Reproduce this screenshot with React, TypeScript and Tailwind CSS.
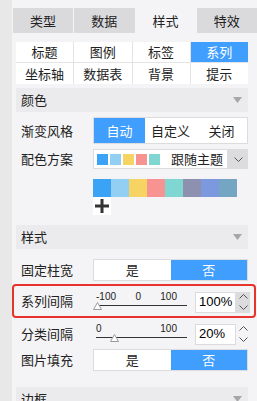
import { ReactNode } from "react";

const font = { fontFamily: '"Noto Sans CJK SC", "Liberation Sans", sans-serif' };

const Tri = () => (
    <svg width="9" height="6" viewBox="0 0 9 6" className="mr-[6px]">
        <path d="M0 0 L9 0 L4.5 6 Z" fill="#a6a6a8" />
    </svg>
);

const Header = ({ title }: { title: string }) => (
    <div className="flex items-center justify-between h-[24px] ml-[4px] mr-[9px] bg-[#ebebed] pl-[5px] text-[13px] text-[#222]">
        <span>{title}</span>
        <Tri />
    </div>
);

const Row = ({ label, children, className = "" }: { label: string; children: ReactNode; className?: string }) => (
    <div className={`flex items-center ${className}`}>
        <span className="w-[81px] pl-[9px] text-[13px] text-[#222] shrink-0">{label}</span>
        {children}
    </div>
);

const Seg = ({ items, active, h }: { items: string[]; active: number; h: string }) => (
    <div className={`flex w-[155px] border border-[#dcdcdf] bg-white ${h}`}>
        {items.map((it, i) => (
            <div
                key={it}
                className={`flex-1 flex items-center justify-center text-[13px] ${i === active ? "bg-[#409eff] text-white" : "text-[#222]"}`}
            >
                {it}
            </div>
        ))}
    </div>
);

const Thumb = () => (
    <svg width="9" height="8" viewBox="0 0 9 8">
        <path d="M4.5 0.5 L8.5 7.5 L0.5 7.5 Z" fill="#fff" stroke="#9a9a9a" />
    </svg>
);

const Slider = ({ labels, pos, className = "" }: { labels: string[]; pos: number; className?: string }) => (
    <div className={`w-[101px] h-[22px] relative ${className}`} style={{ fontFamily: '"Liberation Sans", sans-serif' }}>
        <div className="flex justify-between pl-[3px] pr-[17px] text-[10px] leading-[12px] text-[#222]">
            {labels.map((l) => (
                <span key={l}>{l}</span>
            ))}
        </div>
        <div className="absolute left-[3px] right-[7px] top-[14px] h-px bg-[#333]" />
        <div className="absolute top-[11px]" style={{ left: pos }}>
            <Thumb />
        </div>
    </div>
);

const Chevron = ({ up }: { up?: boolean }) => (
    <svg width="9" height="5" viewBox="0 0 9 5">
        <path d={up ? "M0.5 4.5 L4.5 0.5 L8.5 4.5" : "M0.5 0.5 L4.5 4.5 L8.5 0.5"} fill="none" stroke="#555" />
    </svg>
);

const NumInput = ({ value, hover }: { value: string; hover?: boolean }) => (
    <div className="flex h-[21px]">
        <div className="w-[41px] bg-white border border-[#dcdcdf] flex items-center pl-[3px] text-[13px] text-black" style={{ fontFamily: '"Liberation Sans", sans-serif' }}>
            {value}
        </div>
        <div className={`w-[14px] flex flex-col items-center justify-center gap-[6px] ${hover ? "bg-[#dcdcdf]" : ""}`}>
            <Chevron up />
            <Chevron />
        </div>
    </div>
);

const palette = ["#3ba3f5", "#92cff3", "#f6d463", "#f79390", "#80d6d0", "#8d90ae", "#7c99e0", "#74a6c4"];

export default function App() {
    return (
        <div className="flex w-[257px] h-[401px] overflow-hidden" style={font}>
            <div className="w-[12px] bg-[#e8e8e8] shrink-0" />
            <div className="flex-1 bg-[#f4f4f6] pt-[8px]">
                <div className="grid grid-cols-4 gap-px h-[25px] ml-[1px] text-[13px] text-[#222]">
                    {["类型", "数据", "样式", "特效"].map((t, i) => (
                        <div key={t} className={`flex items-center justify-center ${i === 2 ? "bg-[#f4f4f6]" : "bg-[#dadadd]"}`}>
                            {t}
                        </div>
                    ))}
                </div>

                <div className="grid grid-cols-4 gap-px mt-[9px] ml-[4px] mr-[9px] bg-[#e4e4e6] text-[13px] text-[#222]">
                    {["标题", "图例", "标签", "系列", "坐标轴", "数据表", "背景", "提示"].map((t, i) => (
                        <div
                            key={t}
                            className={`flex items-center justify-center ${i < 4 ? "h-[20px]" : "h-[21px]"} ${i === 3 ? "bg-[#409eff] text-white" : "bg-white"}`}
                        >
                            {t}
                        </div>
                    ))}
                </div>

                <div className="mt-[4px]">
                    <Header title="颜色" />
                </div>

                <Row label="渐变风格" className="mt-[5px]">
                    <Seg items={["自动", "自定义", "关闭"]} active={0} h="h-[27px]" />
                </Row>

                <Row label="配色方案" className="mt-[5px]">
                    <div className="flex w-[155px] h-[20px]">
                        <div className="flex-1 bg-white border border-[#dcdcdf] flex items-center pl-[3px]">
                            {palette.slice(0, 5).map((c) => (
                                <div key={c} className="w-[11px] h-[11px] mr-[2px]" style={{ background: c }} />
                            ))}
                            <span className="ml-[9px] text-[13px] text-[#222]">跟随主题</span>
                        </div>
                        <div className="w-[20px] bg-[#dcdcdf] flex items-center justify-center">
                            <Chevron />
                        </div>
                    </div>
                </Row>

                <div className="ml-[81px] mt-[10px] flex">
                    {palette.map((c) => (
                        <div key={c} className="w-[18px] h-[18px]" style={{ background: c }} />
                    ))}
                </div>
                <div className="ml-[81px] w-[18px] h-[18px] bg-white flex items-center justify-center">
                    <svg width="14" height="14" viewBox="0 0 14 14">
                        <path d="M7 0 V14 M0 7 H14" stroke="#333" strokeWidth="3" />
                    </svg>
                </div>

                <div className="mt-[10px]">
                    <Header title="样式" />
                </div>

                <Row label="固定柱宽" className="mt-[10px]">
                    <Seg items={["是", "否"]} active={1} h="h-[22px]" />
                </Row>

                <div className="mt-[3px] mr-[1px] h-[34px] border-2 border-[#e8332c] rounded-[4px] flex items-center">
                    <span className="w-[79px] pl-[7px] text-[13px] text-[#222] shrink-0">系列间隔</span>
                    <Slider labels={["-100", "0", "100"]} pos={0} className="mt-[2px]" />
                    <div className="ml-[1px] mt-[2px]">
                        <NumInput value="100%" hover />
                    </div>
                </div>

                <Row label="分类间隔" className="mt-[5px]">
                    <Slider labels={["0", "100"]} pos={17} />
                    <div className="ml-[1px]">
                        <NumInput value="20%" />
                    </div>
                </Row>

                <Row label="图片填充" className="mt-[4px]">
                    <Seg items={["是", "否"]} active={1} h="h-[22px]" />
                </Row>

                <div className="mt-[16px]">
                    <Header title="边框" />
                </div>
            </div>
        </div>
    );
}
